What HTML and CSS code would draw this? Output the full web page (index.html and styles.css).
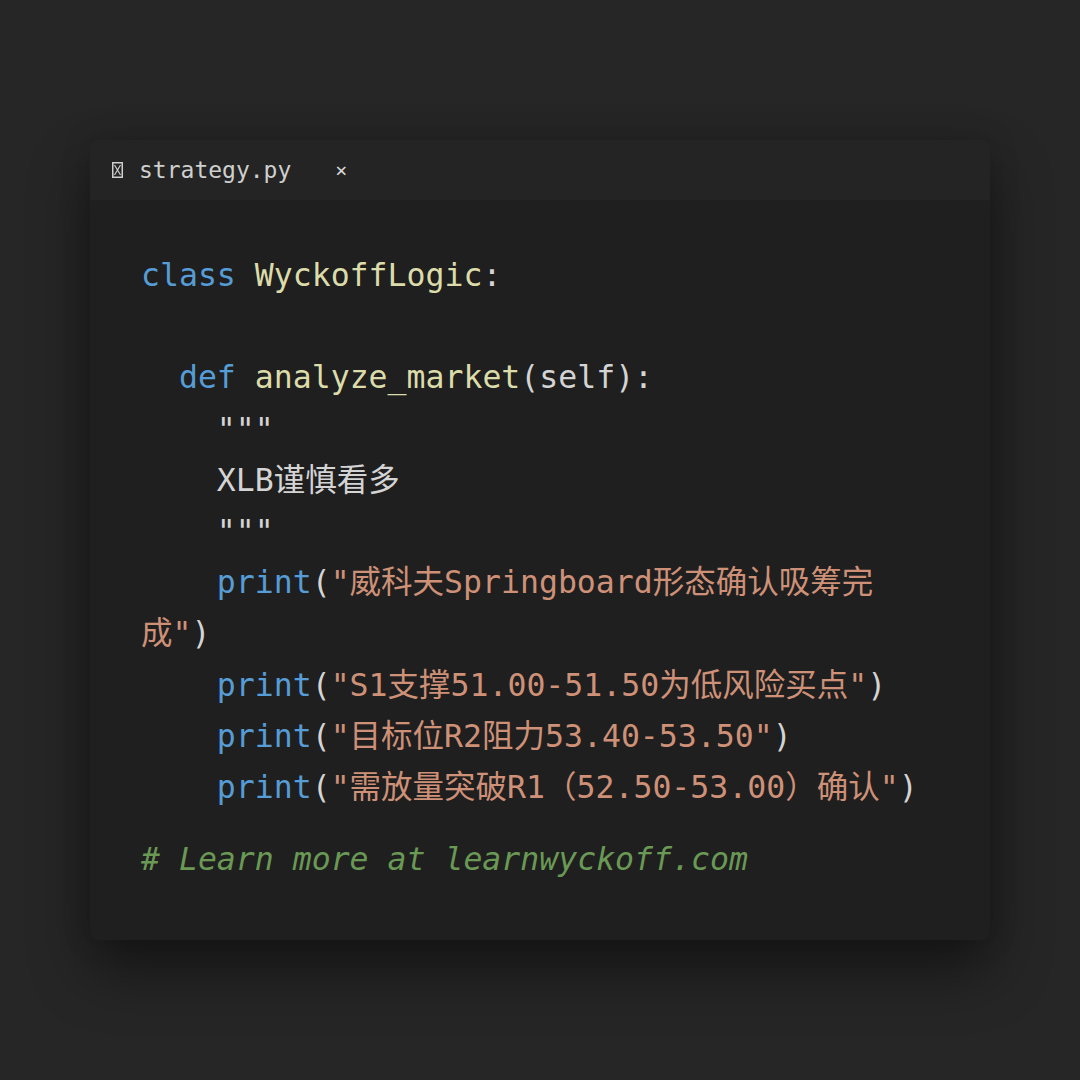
FILE: index.html
```html
<!DOCTYPE html>
<html lang="zh">
<head>
<meta charset="utf-8">
<title>strategy.py</title>
<link rel="stylesheet" href="styles.css">
</head>
<body>
<div class="window">
  <div class="tabbar">
    <div class="tab">
      <svg class="file-icon" width="11" height="16" viewBox="0 0 11 16" aria-hidden="true">
        <rect x="0.75" y="0.75" width="9.5" height="14.5" fill="none" stroke="#cfcfcf" stroke-width="1.5"/>
        <path d="M2.5 3 L8.5 13 M8.5 3 L2.5 13" stroke="#cfcfcf" stroke-width="1.2" fill="none"/>
      </svg>
      <span class="tab-name">strategy.py</span>
      <span class="tab-close">×</span>
    </div>
  </div>
  <div class="editor">
<pre class="code"><span class="kw">class</span> <span class="fn">WyckoffLogic</span>:

  <span class="kw">def</span> <span class="fn">analyze_market</span>(self):
    <span class="doc">"""</span>
    <span class="doc">XLB谨慎看多</span>
    <span class="doc">"""</span>
    <span class="kw">print</span>(<span class="str">"威科夫Springboard形态确认吸筹完成"</span>)
    <span class="kw">print</span>(<span class="str">"S1支撑51.00-51.50为低风险买点"</span>)
    <span class="kw">print</span>(<span class="str">"目标位R2阻力53.40-53.50"</span>)
    <span class="kw">print</span>(<span class="str">"需放量突破R1（52.50-53.00）确认"</span>)</pre>
<p class="comment"># Learn more at learnwyckoff.com</p>
  </div>
</div>
</body>
</html>
```

FILE: styles.css
```css
html, body {
  margin: 0;
  padding: 0;
}

body {
  width: 1080px;
  height: 1080px;
  background: #262626;
  display: flex;
  align-items: center;
  justify-content: center;
  font-family: "DejaVu Sans Mono", "Liberation Mono", "Noto Sans CJK SC", monospace;
}

.window {
  width: 900px;
  height: 800px;
  background: #1f1f1f;
  border-radius: 8px;
  box-shadow: 0 30px 60px rgba(0, 0, 0, 0.45), 0 0 30px rgba(0, 0, 0, 0.15);
  display: flex;
  flex-direction: column;
  overflow: hidden;
}

.tabbar {
  height: 60px;
  flex: none;
  background: #242424;
  display: flex;
  align-items: center;
}

.tab {
  display: flex;
  align-items: center;
  padding-left: 22px;
}

.file-icon {
  display: block;
  margin-right: 16px;
}

.tab-name {
  font-size: 23px;
  color: #cfcfcf;
}

.tab-close {
  margin-left: 44px;
  font-size: 20px;
  color: #d8d8d8;
}

.editor {
  padding: 50px 55px 0 51px;
}

.code {
  margin: 0;
  font-family: "DejaVu Sans Mono", "Noto Sans CJK SC", monospace;
  font-size: 31.5px;
  line-height: 51.2px;
  color: #d4d4d4;
  white-space: pre-wrap;
}

.kw { color: #569cd6; }
.fn { color: #dcdcaa; }
.str { color: #ce9178; }
.doc { color: #d4d4d4; }

.comment {
  margin: 21px 0 0;
  font-family: "DejaVu Sans Mono", "Noto Sans CJK SC", monospace;
  font-size: 31.5px;
  line-height: 51.2px;
  font-style: italic;
  color: #6a9955;
  white-space: pre;
}
```
